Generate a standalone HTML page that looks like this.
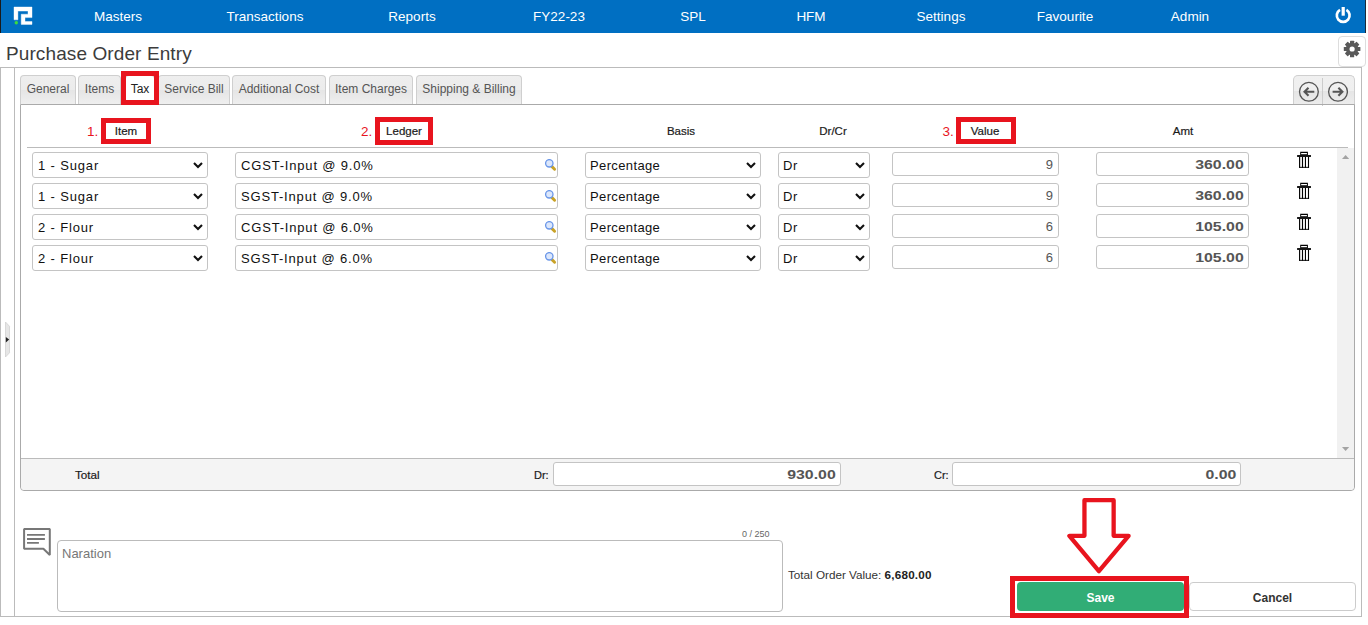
<!DOCTYPE html>
<html><head><meta charset="utf-8">
<style>
*{box-sizing:border-box;margin:0;padding:0}
html,body{width:1368px;height:625px;overflow:hidden;background:#fff;font-family:"Liberation Sans",sans-serif;color:#333;position:relative}
.a{position:absolute}
#nav{left:0;top:0;width:1366px;height:33px;background:#006fc2;border-left:1px solid #1a1a1a;border-right:1px solid #1a2a3a}
.ni{position:absolute;top:9px;color:#fff;font-size:13.5px;white-space:nowrap;transform:translateX(-50%)}
#title{left:6px;top:42.5px;font-size:19px;letter-spacing:0.1px;color:#3c3c3c;white-space:nowrap}
#gear{left:1338px;top:36px;width:28px;height:31px;border:1px solid #ddd;border-radius:4px;background:#fff}
#outer{left:0;top:67px;width:1362px;height:550px;border:1px solid #bbb}
#vline{left:14px;top:67px;width:1px;height:550px;background:#bbb}
.tab{position:absolute;top:75px;height:29px;border:1px solid #cfcfcf;border-bottom:none;border-radius:4px 4px 0 0;background:linear-gradient(#eeeeee 0%,#ececec 50%,#e5e5e5 52%,#efefef 100%);font-size:12px;color:#555;text-align:center;line-height:26.5px;white-space:nowrap}
.tab.act{background:#fff;color:#222}
#panel{left:20px;top:104px;width:1335px;height:387px;border:1px solid #aaa;border-radius:0 0 4px 4px}
.hl{position:absolute;top:124.5px;font-size:11.5px;color:#1a1a1a;-webkit-text-stroke:0.2px #1a1a1a;white-space:nowrap;transform:translateX(-50%)}
.rb{position:absolute;border:5px solid #e8141e}
.rn{position:absolute;top:124px;font-size:13.5px;color:#e8141e}
#hline{left:27px;top:147px;width:1321px;height:1px;background:#bbb}
.sel,.inp{position:absolute;height:26px;border:1px solid #c4c4c4;border-radius:3px;background:#fff;font-size:13px;color:#111;line-height:26px;padding-left:5px;white-space:nowrap}
.chev{position:absolute;right:4px;top:9px}
.inp.r{text-align:right;padding-right:5px;color:#555}
.inp.b{font-weight:bold}
.num{display:inline-block;transform:scaleX(1.32);transform-origin:right center;font-size:12px}
.inp.r:not(.b) .num{transform:none;font-size:13px}
#sb{left:1337px;top:148px;width:17px;height:310px;background:#f1f1f1}
#tot{left:21px;top:458px;width:1333px;height:32px;background:#f4f4f4;border-top:1px solid #bbb;border-radius:0 0 4px 4px}
.lbl{position:absolute;font-size:12px;color:#333;white-space:nowrap}
</style></head><body>
<div id="nav" class="a">
  <svg class="a" style="left:12px;top:0px" width="22" height="30" viewBox="13 0 22 30">
    <path d="M14 7 H32 V17.6 H25 V21.5 H32 V24.4 H21.2 V14.2 H28 V11.1 H17.9 V19.8 H14 Z" fill="#fff" stroke="#fff" stroke-width="0.4" stroke-linejoin="round"/>
    <circle cx="16.3" cy="22.8" r="1.7" fill="#3ddc3d"/>
  </svg>
  <div class="ni" style="left:117px">Masters</div>
  <div class="ni" style="left:264px">Transactions</div>
  <div class="ni" style="left:411px">Reports</div>
  <div class="ni" style="left:558px">FY22-23</div>
  <div class="ni" style="left:692px">SPL</div>
  <div class="ni" style="left:810px">HFM</div>
  <div class="ni" style="left:940px">Settings</div>
  <div class="ni" style="left:1064px">Favourite</div>
  <div class="ni" style="left:1189px">Admin</div>
  <svg class="a" style="left:1332.2px;top:5px" width="20" height="20" viewBox="0 0 20 20">
    <path d="M7 4.9 A6.4 6.4 0 1 0 13.4 4.9" fill="none" stroke="#fff" stroke-width="2.7"/>
    <line x1="10.2" y1="2" x2="10.2" y2="10.7" stroke="#fff" stroke-width="3.2"/>
  </svg>
</div>
<div id="title" class="a">Purchase Order Entry</div>
<div id="gear" class="a">
  <svg class="a" style="left:4px;top:3px" width="18" height="18" viewBox="0 0 18 18">
    <g fill="#595959" transform="translate(9.1 9)">
      <circle r="6.2"/>
      <rect x="-2.1" y="-8.3" width="4.2" height="16.6" rx="0.6"/>
      <rect x="-2.1" y="-8.3" width="4.2" height="16.6" rx="0.6" transform="rotate(45)"/>
      <rect x="-2.1" y="-8.3" width="4.2" height="16.6" rx="0.6" transform="rotate(90)"/>
      <rect x="-2.1" y="-8.3" width="4.2" height="16.6" rx="0.6" transform="rotate(135)"/>
      <circle r="2.6" fill="#fff"/>
    </g>
  </svg>
</div>
<div id="outer" class="a"></div>
<div id="vline" class="a"></div>
<svg class="a" style="left:0px;top:315px" width="14" height="50" viewBox="0 315 14 50"><path d="M5.5 322 L9.5 326.3 V352.8 L5.5 357 Z" fill="#e6e6e6" stroke="#d0d0d0" stroke-width="0.8"/><path d="M5.8 337 L9.2 339.6 L5.8 342.4 Z" fill="#222"/></svg>

<div class="tab" style="left:20px;width:56px">General</div>
<div class="tab" style="left:78px;width:43px">Items</div>
<div class="tab act" style="left:125px;width:30px">Tax</div>
<div class="tab" style="left:158px;width:72px">Service Bill</div>
<div class="tab" style="left:232px;width:94px">Additional Cost</div>
<div class="tab" style="left:329px;width:84px">Item Charges</div>
<div class="tab" style="left:416px;width:106px">Shipping &amp; Billing</div>

<!-- nav arrows -->
<div class="a" style="left:1293px;top:75px;width:62px;height:30px;border:1px solid #cfcfcf;border-bottom:none;border-radius:5px 5px 0 0;background:linear-gradient(#f0f0f0 0%,#efefef 50%,#e5e5e5 52%,#ededed 100%)"></div>
<div class="a" style="left:1322px;top:78px;width:1px;height:28px;background:#ccc"></div>
<svg class="a" style="left:1298px;top:81px" width="21" height="21" viewBox="0 0 21 21"><circle cx="10.9" cy="10.8" r="9.4" fill="none" stroke="#555" stroke-width="1.3"/><path d="M16.3 10.8 H6.5 M10.5 6.8 L6.5 10.8 L10.5 14.8" fill="none" stroke="#555" stroke-width="2.1"/></svg>
<svg class="a" style="left:1327px;top:81px" width="21" height="21" viewBox="0 0 21 21"><circle cx="11" cy="10.8" r="9.4" fill="none" stroke="#555" stroke-width="1.3"/><path d="M5.6 10.8 H15.4 M11.4 6.8 L15.4 10.8 L11.4 14.8" fill="none" stroke="#555" stroke-width="2.1"/></svg>
<div id="panel" class="a"></div>
<div class="rb" style="left:121px;top:71px;width:38px;height:34px"></div>

<!-- header -->
<div class="rn" style="left:87px">1.</div>
<div class="rb" style="left:101px;top:118px;width:50px;height:26px"></div>
<div class="hl" style="left:126px">Item</div>
<div class="rn" style="left:361px">2.</div>
<div class="rb" style="left:375px;top:117px;width:58px;height:28px"></div>
<div class="hl" style="left:404px">Ledger</div>
<div class="hl" style="left:681px">Basis</div>
<div class="hl" style="left:833px">Dr/Cr</div>
<div class="rn" style="left:942.5px">3.</div>
<div class="rb" style="left:956px;top:117px;width:60px;height:27px"></div>
<div class="hl" style="left:985px">Value</div>
<div class="hl" style="left:1183px">Amt</div>
<div id="hline" class="a"></div>
<div id="sb" class="a"></div>
<svg class="a" style="left:1342px;top:155px" width="8" height="4"><path d="M0 4 L3.6 0 L7.2 4z" fill="#a3a3a3"/></svg>
<svg class="a" style="left:1342px;top:447px" width="8" height="4"><path d="M0 0 L3.6 4 L7.2 0z" fill="#a3a3a3"/></svg>

<div class="sel" style="left:32px;top:152px;width:176px"><span style="letter-spacing:0.85px">1 - Sugar</span><svg class="chev" width="10" height="7" viewBox="0 0 10 7"><path d="M1 1 L5 5 L9 1" fill="none" stroke="#111" stroke-width="2.1"/></svg></div>
<div class="inp" style="left:235px;top:152px;width:323px"><span style="letter-spacing:0.82px">CGST-Input @ 9.0%</span></div>
<svg class="a" style="left:544px;top:159px" width="14" height="14" viewBox="0 0 14 14"><path d="M8 7.6 L10.6 10.2" stroke="#c9a227" stroke-width="2.9" stroke-linecap="round"/><circle cx="5.3" cy="4.3" r="3.7" fill="#dce7fb" stroke="#6a96e8" stroke-width="1.3"/></svg>
<div class="sel" style="left:585px;top:152px;width:176px;padding-left:4px"><span style="letter-spacing:0.37px">Percentage</span><svg class="chev" width="10" height="7" viewBox="0 0 10 7"><path d="M1 1 L5 5 L9 1" fill="none" stroke="#111" stroke-width="2.1"/></svg></div>
<div class="sel" style="left:778px;top:152px;width:92px;padding-left:4px"><span style="letter-spacing:0.6px">Dr</span><svg class="chev" width="10" height="7" viewBox="0 0 10 7"><path d="M1 1 L5 5 L9 1" fill="none" stroke="#111" stroke-width="2.1"/></svg></div>
<div class="inp r" style="left:892px;top:152px;width:167px;height:24px;line-height:24px"><span class="num">9</span></div>
<div class="inp r b" style="left:1096px;top:152px;width:153px;height:24px;line-height:24px;padding-right:4px"><span class="num">360.00</span></div>
<svg class="a" style="left:1297px;top:151px" width="15" height="17" viewBox="0 0 15 17"><path fill="#000" fill-rule="evenodd" d="M3.2 0.85 H10.9 V4.2 H3.2 Z M4.15 2 V3.15 H9.92 V2 Z"/><rect x="0.1" y="4.1" width="13.86" height="1.8"/><rect x="2.04" y="5.8" width="1.15" height="11"/><rect x="4.92" y="5.8" width="1.16" height="11"/><rect x="7.9" y="5.8" width="1.1" height="11"/><rect x="10.95" y="5.8" width="1.1" height="11"/><rect x="2.04" y="15.85" width="10" height="0.95"/></svg>
<div class="sel" style="left:32px;top:183px;width:176px"><span style="letter-spacing:0.85px">1 - Sugar</span><svg class="chev" width="10" height="7" viewBox="0 0 10 7"><path d="M1 1 L5 5 L9 1" fill="none" stroke="#111" stroke-width="2.1"/></svg></div>
<div class="inp" style="left:235px;top:183px;width:323px"><span style="letter-spacing:0.82px">SGST-Input @ 9.0%</span></div>
<svg class="a" style="left:544px;top:190px" width="14" height="14" viewBox="0 0 14 14"><path d="M8 7.6 L10.6 10.2" stroke="#c9a227" stroke-width="2.9" stroke-linecap="round"/><circle cx="5.3" cy="4.3" r="3.7" fill="#dce7fb" stroke="#6a96e8" stroke-width="1.3"/></svg>
<div class="sel" style="left:585px;top:183px;width:176px;padding-left:4px"><span style="letter-spacing:0.37px">Percentage</span><svg class="chev" width="10" height="7" viewBox="0 0 10 7"><path d="M1 1 L5 5 L9 1" fill="none" stroke="#111" stroke-width="2.1"/></svg></div>
<div class="sel" style="left:778px;top:183px;width:92px;padding-left:4px"><span style="letter-spacing:0.6px">Dr</span><svg class="chev" width="10" height="7" viewBox="0 0 10 7"><path d="M1 1 L5 5 L9 1" fill="none" stroke="#111" stroke-width="2.1"/></svg></div>
<div class="inp r" style="left:892px;top:183px;width:167px;height:24px;line-height:24px"><span class="num">9</span></div>
<div class="inp r b" style="left:1096px;top:183px;width:153px;height:24px;line-height:24px;padding-right:4px"><span class="num">360.00</span></div>
<svg class="a" style="left:1297px;top:182px" width="15" height="17" viewBox="0 0 15 17"><path fill="#000" fill-rule="evenodd" d="M3.2 0.85 H10.9 V4.2 H3.2 Z M4.15 2 V3.15 H9.92 V2 Z"/><rect x="0.1" y="4.1" width="13.86" height="1.8"/><rect x="2.04" y="5.8" width="1.15" height="11"/><rect x="4.92" y="5.8" width="1.16" height="11"/><rect x="7.9" y="5.8" width="1.1" height="11"/><rect x="10.95" y="5.8" width="1.1" height="11"/><rect x="2.04" y="15.85" width="10" height="0.95"/></svg>
<div class="sel" style="left:32px;top:214px;width:176px"><span style="letter-spacing:0.85px">2 - Flour</span><svg class="chev" width="10" height="7" viewBox="0 0 10 7"><path d="M1 1 L5 5 L9 1" fill="none" stroke="#111" stroke-width="2.1"/></svg></div>
<div class="inp" style="left:235px;top:214px;width:323px"><span style="letter-spacing:0.82px">CGST-Input @ 6.0%</span></div>
<svg class="a" style="left:544px;top:221px" width="14" height="14" viewBox="0 0 14 14"><path d="M8 7.6 L10.6 10.2" stroke="#c9a227" stroke-width="2.9" stroke-linecap="round"/><circle cx="5.3" cy="4.3" r="3.7" fill="#dce7fb" stroke="#6a96e8" stroke-width="1.3"/></svg>
<div class="sel" style="left:585px;top:214px;width:176px;padding-left:4px"><span style="letter-spacing:0.37px">Percentage</span><svg class="chev" width="10" height="7" viewBox="0 0 10 7"><path d="M1 1 L5 5 L9 1" fill="none" stroke="#111" stroke-width="2.1"/></svg></div>
<div class="sel" style="left:778px;top:214px;width:92px;padding-left:4px"><span style="letter-spacing:0.6px">Dr</span><svg class="chev" width="10" height="7" viewBox="0 0 10 7"><path d="M1 1 L5 5 L9 1" fill="none" stroke="#111" stroke-width="2.1"/></svg></div>
<div class="inp r" style="left:892px;top:214px;width:167px;height:24px;line-height:24px"><span class="num">6</span></div>
<div class="inp r b" style="left:1096px;top:214px;width:153px;height:24px;line-height:24px;padding-right:4px"><span class="num">105.00</span></div>
<svg class="a" style="left:1297px;top:213px" width="15" height="17" viewBox="0 0 15 17"><path fill="#000" fill-rule="evenodd" d="M3.2 0.85 H10.9 V4.2 H3.2 Z M4.15 2 V3.15 H9.92 V2 Z"/><rect x="0.1" y="4.1" width="13.86" height="1.8"/><rect x="2.04" y="5.8" width="1.15" height="11"/><rect x="4.92" y="5.8" width="1.16" height="11"/><rect x="7.9" y="5.8" width="1.1" height="11"/><rect x="10.95" y="5.8" width="1.1" height="11"/><rect x="2.04" y="15.85" width="10" height="0.95"/></svg>
<div class="sel" style="left:32px;top:245px;width:176px"><span style="letter-spacing:0.85px">2 - Flour</span><svg class="chev" width="10" height="7" viewBox="0 0 10 7"><path d="M1 1 L5 5 L9 1" fill="none" stroke="#111" stroke-width="2.1"/></svg></div>
<div class="inp" style="left:235px;top:245px;width:323px"><span style="letter-spacing:0.82px">SGST-Input @ 6.0%</span></div>
<svg class="a" style="left:544px;top:252px" width="14" height="14" viewBox="0 0 14 14"><path d="M8 7.6 L10.6 10.2" stroke="#c9a227" stroke-width="2.9" stroke-linecap="round"/><circle cx="5.3" cy="4.3" r="3.7" fill="#dce7fb" stroke="#6a96e8" stroke-width="1.3"/></svg>
<div class="sel" style="left:585px;top:245px;width:176px;padding-left:4px"><span style="letter-spacing:0.37px">Percentage</span><svg class="chev" width="10" height="7" viewBox="0 0 10 7"><path d="M1 1 L5 5 L9 1" fill="none" stroke="#111" stroke-width="2.1"/></svg></div>
<div class="sel" style="left:778px;top:245px;width:92px;padding-left:4px"><span style="letter-spacing:0.6px">Dr</span><svg class="chev" width="10" height="7" viewBox="0 0 10 7"><path d="M1 1 L5 5 L9 1" fill="none" stroke="#111" stroke-width="2.1"/></svg></div>
<div class="inp r" style="left:892px;top:245px;width:167px;height:24px;line-height:24px"><span class="num">6</span></div>
<div class="inp r b" style="left:1096px;top:245px;width:153px;height:24px;line-height:24px;padding-right:4px"><span class="num">105.00</span></div>
<svg class="a" style="left:1297px;top:244px" width="15" height="17" viewBox="0 0 15 17"><path fill="#000" fill-rule="evenodd" d="M3.2 0.85 H10.9 V4.2 H3.2 Z M4.15 2 V3.15 H9.92 V2 Z"/><rect x="0.1" y="4.1" width="13.86" height="1.8"/><rect x="2.04" y="5.8" width="1.15" height="11"/><rect x="4.92" y="5.8" width="1.16" height="11"/><rect x="7.9" y="5.8" width="1.1" height="11"/><rect x="10.95" y="5.8" width="1.1" height="11"/><rect x="2.04" y="15.85" width="10" height="0.95"/></svg>

<div id="tot" class="a"></div>
<div class="lbl" style="left:75px;top:468px;font-size:11.7px;color:#1a1a1a;-webkit-text-stroke:0.2px #1a1a1a">Total</div>
<div class="lbl" style="left:534px;top:469px;font-size:11px;color:#1a1a1a;-webkit-text-stroke:0.2px #1a1a1a">Dr:</div>
<div class="inp r b" style="left:553px;top:462px;width:288px;height:24px;line-height:24px;padding-right:4px"><span class="num">930.00</span></div>
<div class="lbl" style="left:934px;top:469px;font-size:11px;color:#1a1a1a;-webkit-text-stroke:0.2px #1a1a1a">Cr:</div>
<div class="inp r b" style="left:952px;top:462px;width:289px;height:24px;line-height:24px;padding-right:4px"><span class="num">0.00</span></div>

<!-- naration -->
<svg class="a" style="left:20px;top:524px" width="36" height="36" viewBox="0 0 36 36"><path d="M4.1 5 H29.8 V31 L23.4 24.8 H4.1 Z" fill="none" stroke="#777" stroke-width="2" stroke-linejoin="bevel"/><path d="M7 10.9 H24.9 M7 15 H24.9 M7 18.9 H18.9" stroke="#777" stroke-width="1.8"/></svg>
<div class="lbl" style="left:742px;top:529px;font-size:9px;color:#666">0 / 250</div>
<div class="a" style="left:57px;top:540px;width:726px;height:72px;border:1px solid #bbb;border-radius:4px"></div>
<div class="lbl" style="left:62px;top:546px;font-size:13px;color:#777">Naration</div>
<div class="lbl" style="left:788px;top:568px;font-size:11.7px;color:#333">Total Order Value: <b style="color:#222;letter-spacing:0.2px">6,680.00</b></div>

<div class="a" style="left:1017px;top:582px;width:167px;height:29px;background:#31ad76;border-radius:4px;color:#fff;font-weight:bold;font-size:12px;text-align:center;line-height:32.5px">Save</div>
<div class="rb" style="left:1010px;top:576px;width:179px;height:42px"></div>
<div class="a" style="left:1189px;top:582px;width:167px;height:29px;border:1px solid #ccc;border-radius:4px;color:#333;font-weight:bold;font-size:12px;text-align:center;line-height:31px">Cancel</div>
<svg class="a" style="left:1065px;top:496px" width="68" height="80" viewBox="0 0 68 80"><path d="M19.45 4.15 H48.65 V39.85 H63.6 L33.9 75.1 L4.4 39.85 H19.45 Z" fill="#fff" stroke="#e8141e" stroke-width="4.3" stroke-linejoin="round"/></svg>
</body></html>
